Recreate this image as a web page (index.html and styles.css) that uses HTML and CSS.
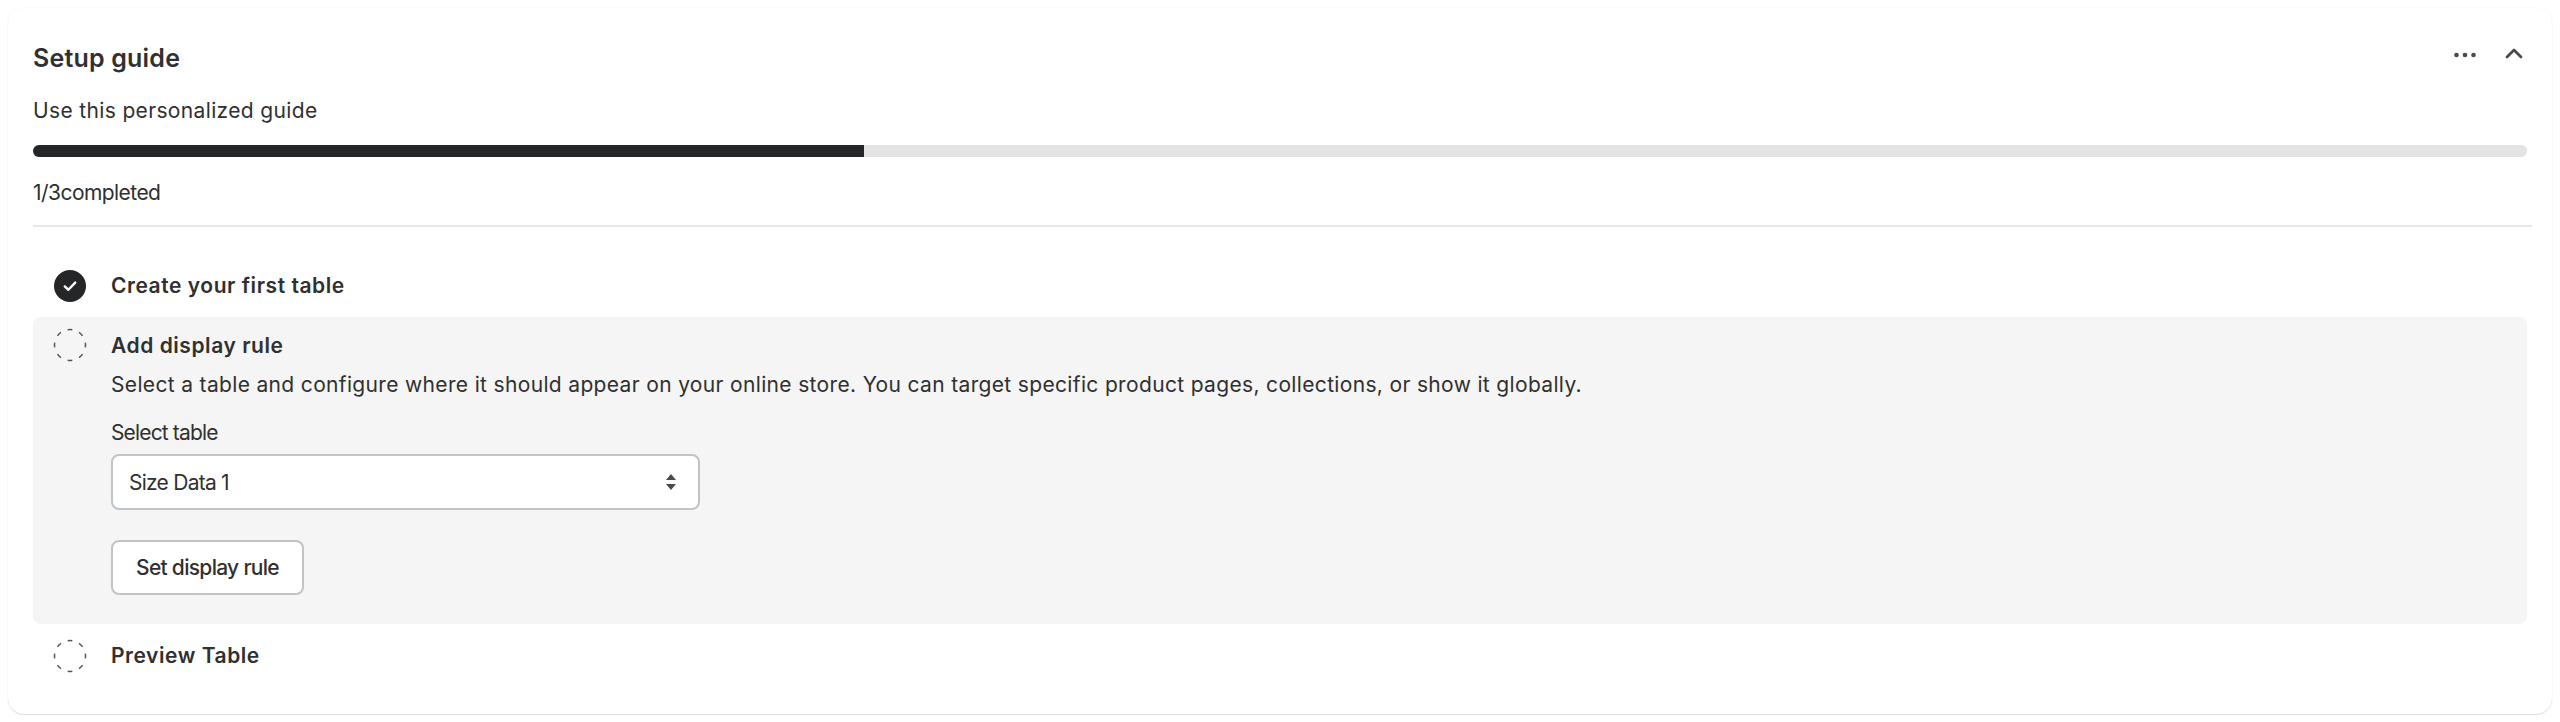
FILE: index.html
```html
<!DOCTYPE html>
<html lang="en">
<head>
  <meta charset="UTF-8" />
  <title>Setup guide</title>
  <link rel="stylesheet" href="styles.css">
</head>
<body>

  <div class="card">
    <div class="card-header">
      <h2 class="card-title">Setup guide</h2>
      <div class="card-actions">
        <svg class="icon-dots" width="24" height="6" viewBox="0 0 24 6"><circle cx="3.5" cy="3" r="2.3"/><circle cx="12" cy="3" r="2.3"/><circle cx="20.5" cy="3" r="2.3"/></svg>
        <svg class="icon-chevron" width="18" height="11" viewBox="0 0 18 11"><path d="M2 9l7-7 7 7"/></svg>
      </div>
    </div>

    <p class="subtitle">Use this personalized guide</p>

    <div class="progress"><div class="progress-fill"></div></div>
    <p class="progress-text">1/3completed</p>

    <div class="divider"></div>

    <div class="step step-done">
      <svg class="step-icon" width="32" height="32" viewBox="0 0 32 32"><circle cx="16" cy="16" r="16" fill="#242628"/><path d="M10.8 16.4l3.6 3.4 6.8-7.2" fill="none" stroke="#fff" stroke-width="2.4" stroke-linecap="round" stroke-linejoin="round"/></svg>
      <div class="step-title">Create your first table</div>
    </div>

    <div class="step step-open">
      <svg class="step-icon" width="34" height="34" viewBox="0 0 34 34"><circle class="dashed" cx="17" cy="17" r="15.5" pathLength="80"/></svg>
      <div class="step-body">
        <div class="step-title">Add display rule</div>
        <p class="step-text">Select a table and configure where it should appear on your online store. You can target specific product pages, collections, or show it globally.</p>
        <div class="field-label">Select table</div>
        <div class="select">
          <span>Size Data 1</span>
          <svg width="12" height="18" viewBox="0 0 12 18"><path d="M6 1l5 6H1zM6 17l-5-6h10z" fill="#4a4a4a"/></svg>
        </div>
        <button class="btn">Set display rule</button>
      </div>
    </div>

    <div class="step step-last">
      <svg class="step-icon" width="34" height="34" viewBox="0 0 34 34"><circle class="dashed" cx="17" cy="17" r="15.5" pathLength="80"/></svg>
      <div class="step-title">Preview Table</div>
    </div>
  </div>

</body>
</html>
```

FILE: styles.css
```css
* {
  box-sizing: border-box;
  margin: 0;
  padding: 0;
}

html, body {
  background: #fff;
  font-family: Inter, "Liberation Sans", sans-serif;
  color: #303030;
}

body {
  padding: 8px;
}

.card {
  height: 706px;
  padding: 0 20px 0 25px;
  background: #fff;
  border-radius: 16px;
  box-shadow: 0 1px 1px rgba(0,0,0,0.12), 0 0 2px rgba(0,0,0,0.06);
}

.card-header {
  display: flex;
  align-items: center;
  justify-content: space-between;
  height: 70px;
  padding-top: 30px;
  padding-right: 4px;
}

.card-title {
  font-size: 25px;
  line-height: 40px;
  font-weight: 600;
  letter-spacing: 0.2px;
}

.card-actions {
  display: flex;
  align-items: center;
  gap: 28px;
  margin-right: 5px;
  margin-top: -10px;
}

.icon-dots {
  fill: #4a4a4a;
  margin-top: 4px;
}

.icon-chevron path {
  fill: none;
  stroke: #4a4a4a;
  stroke-width: 2.8;
  stroke-linecap: round;
  stroke-linejoin: round;
}

.subtitle {
  margin-top: 17px;
  font-size: 21px;
  line-height: 32px;
  letter-spacing: 0.35px;
}

.progress {
  margin-top: 18px;
  margin-right: 5px;
  height: 12px;
  border-radius: 6px;
  background: #e3e3e3;
  overflow: hidden;
}

.progress-fill {
  width: 33.33%;
  height: 100%;
  background: #242628;
}

.progress-text {
  margin-top: 22px;
  font-size: 21px;
  line-height: 28px;
  letter-spacing: -0.55px;
}

.divider {
  margin-top: 18px;
  height: 2px;
  background: #e6e6e6;
}

.step {
  display: flex;
  gap: 24px;
  padding-left: 20px;
}

.step-done {
  align-items: center;
  height: 90px;
  padding-top: 27px;
  padding-left: 21px;
  gap: 25px;
}

.step-open {
  height: 307px;
  padding-top: 12px;
  background: #f5f5f5;
  border-radius: 8px;
  margin-right: 5px;
}

.step-open .step-icon {
  margin-top: -1px;
}

.step-last {
  align-items: center;
  height: 60px;
  padding-top: 3px;
}

.step-title {
  font-size: 21px;
  line-height: 34px;
  font-weight: 600;
  letter-spacing: 0.55px;
}

.step-text {
  margin-top: 5px;
  font-size: 21px;
  line-height: 34px;
  letter-spacing: 0.34px;
}

.field-label {
  margin-top: 17px;
  font-size: 21px;
  line-height: 28px;
  letter-spacing: -0.85px;
}

.select {
  display: flex;
  align-items: center;
  justify-content: space-between;
  width: 589px;
  height: 56px;
  margin-top: 7px;
  padding: 0 21px 0 16px;
  background: #fff;
  border: 2px solid #bfc4c8;
  border-radius: 8px;
  font-size: 21px;
  letter-spacing: -0.75px;
}

.btn {
  display: block;
  width: 193px;
  height: 55px;
  margin-top: 30px;
  background: #fff;
  border: 2px solid #bfc4c8;
  border-radius: 8px;
  font-family: inherit;
  font-size: 21px;
  font-weight: 500;
  letter-spacing: -0.7px;
  color: #303030;
}

.dashed {
  fill: none;
  stroke: #555;
  stroke-width: 1.5;
  stroke-dasharray: 4 6;
  stroke-dashoffset: 2;
}
```
